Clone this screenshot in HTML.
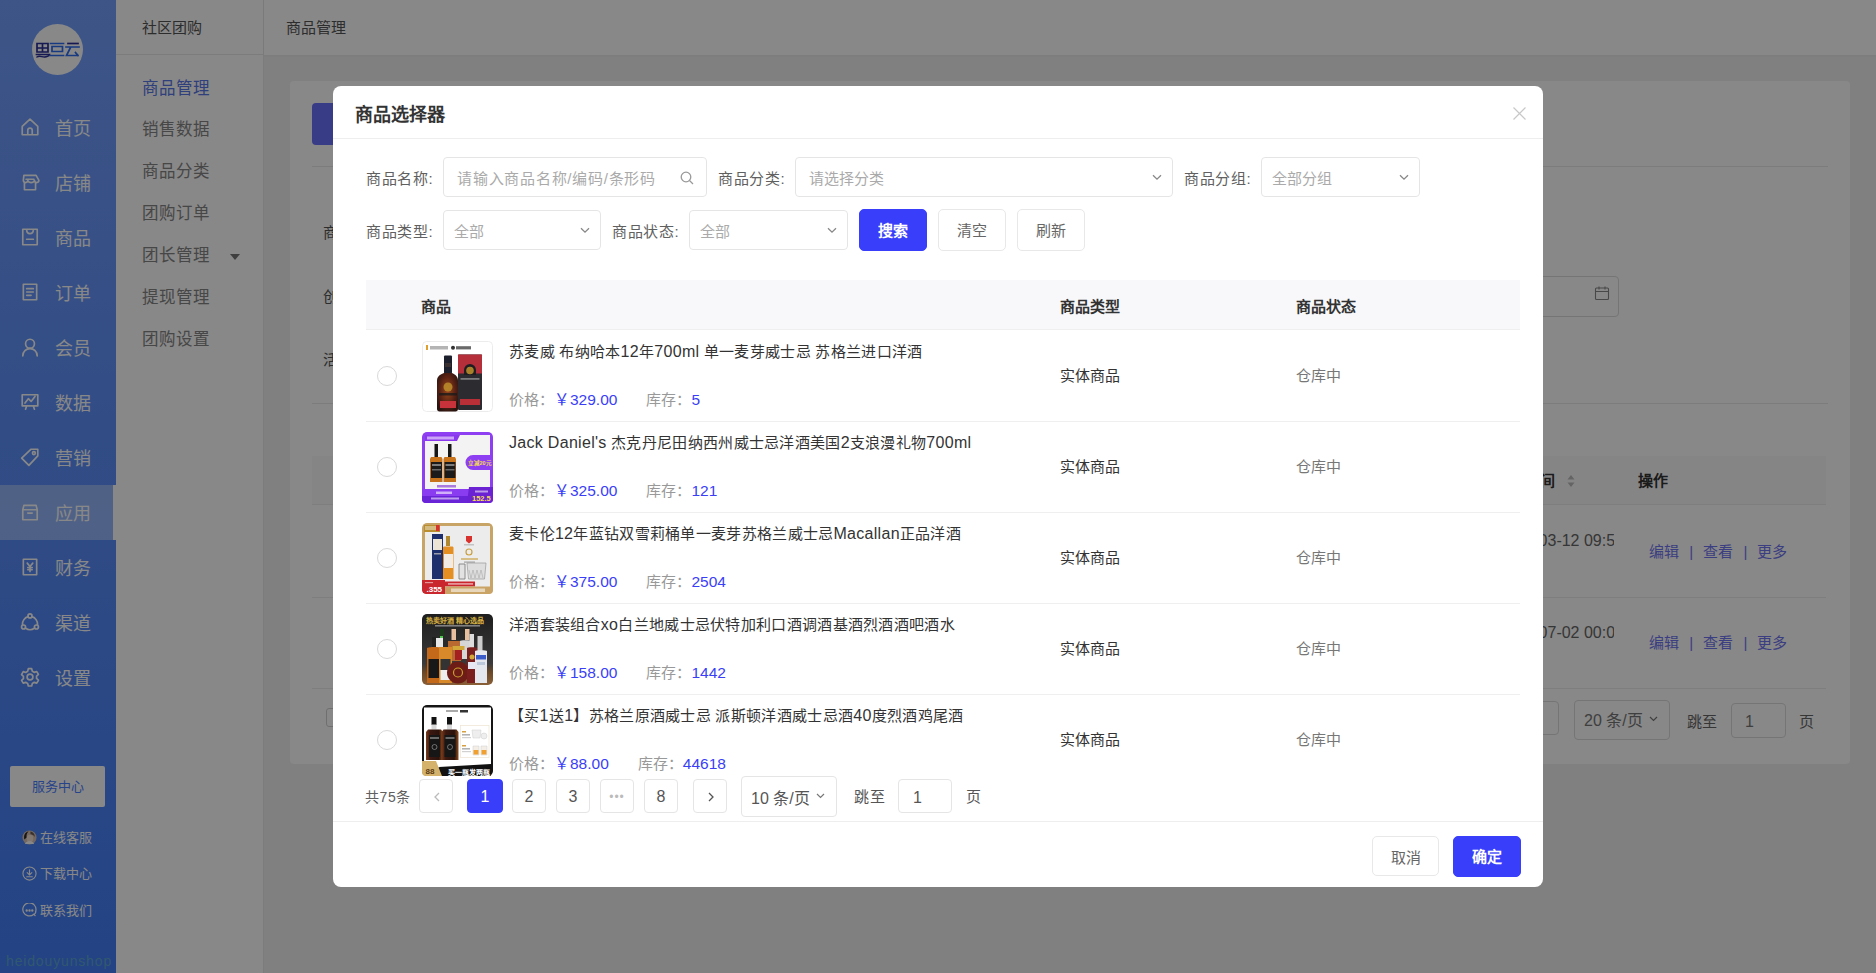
<!DOCTYPE html>
<html lang="zh-CN">
<head>
<meta charset="utf-8">
<style>
*{box-sizing:border-box;margin:0;padding:0}
html,body{width:1876px;height:973px;overflow:hidden}
body{position:relative;font-family:"Liberation Sans",sans-serif;font-size:14px;color:#333;background:#f0f0f0}
.abs{position:absolute}
/* sidebar */
#side{left:0;top:0;width:116px;height:973px;background:linear-gradient(#749ffd,#437ef8)}
#logo{left:32px;top:24px;width:51px;height:51px;border-radius:50%;background:#fff;color:#2a6bd8;font-size:14px;font-weight:bold;line-height:51px;text-align:center;letter-spacing:-1px}
.mi{left:0;width:116px;height:55px;color:#fff;font-size:18px}
.mi .ic{position:absolute;left:20px;top:17px;width:20px;height:20px}
.mi .tx{position:absolute;left:55px;top:2px;line-height:55px}
.mi.on{background:rgba(255,255,255,.36)}
.mi.on:after{content:"";position:absolute;right:0;top:0;width:3px;height:55px;background:#fff}
#svc{left:10px;top:766px;width:95px;height:41px;background:#fff;color:#4a80ff;font-size:13px;line-height:41px;text-align:center;border-radius:2px}
.bl{left:22px;height:20px;color:#fff;font-size:13px;line-height:20px}
.bl .ic{position:absolute;left:0;top:2px;width:15px;height:15px}
.bl .tx{position:absolute;left:18px;top:0;white-space:nowrap}
#wm{left:6px;top:953px;font-size:14px;line-height:16px;color:#62b0c8;letter-spacing:.85px;opacity:.8}
/* submenu */
#sub{left:116px;top:0;width:148px;height:973px;background:#fff;border-right:1px solid #e8e8e8}
#subh{left:0;top:0;width:147px;height:55px;border-bottom:1px solid #e8e8e8}
#subh span{position:absolute;left:26px;top:0;line-height:55px;font-size:15px;color:#555}
.si{left:26px;font-size:16.5px;color:#858585;line-height:20px;white-space:nowrap}
.si.on{color:#5a78e8}
/* header */
#hdr{left:264px;top:0;width:1612px;height:55px;background:#fff;box-shadow:0 1px 2px rgba(0,0,0,.04)}
#hdr span{position:absolute;left:22px;top:0;line-height:55px;font-size:15px;color:#555}
/* card */
#card{left:290px;top:81px;width:1560px;height:683px;background:#fff;border-radius:4px}
/* mask */
#mask{left:0;top:0;width:1876px;height:973px;background:rgba(0,0,0,.467)}
/* modal */
#modal{left:333px;top:86px;width:1210px;height:801px;background:#fff;border-radius:8px;overflow:hidden}

/* card content */
.cline{position:absolute;height:1px;background:#e8e8e8}
/* modal inner */
#mtitle{left:22px;top:15.5px;font-size:18px;font-weight:bold;color:#333;line-height:26px}
#mhline{left:0;top:52px;width:1210px;height:1px;background:#eee}
#mclose{left:1180px;top:21px;width:13px;height:13px}
.lbl{position:absolute;font-size:15px;color:#606060;line-height:20px;white-space:nowrap;letter-spacing:.6px}
.inp{position:absolute;height:40px;border:1px solid #e5e5e5;border-radius:4px;background:#fff}
.inp .ph{position:absolute;left:13px;top:1.5px;line-height:38px;font-size:15px;color:#aaa;white-space:nowrap}
.inp .arr{position:absolute;right:10px;top:16px;width:10px;height:7px}
.btn{position:absolute;height:42px;width:68px;border:1px solid #e8e8e8;border-radius:5px;background:#fff;font-size:15px;color:#666;line-height:42px;text-align:center}
.btn.pri{background:#383efa;border-color:#383efa;color:#fff;font-weight:bold}
#tbl{left:33px;top:194px;width:1154px;height:498px;overflow:hidden}
#thead{left:0;top:0;width:1154px;height:50px;background:#f8f8fa;border-bottom:1px solid #efefef}
.th{position:absolute;top:2px;line-height:49px;font-size:15px;font-weight:bold;color:#333}
.row{position:absolute;left:0;width:1154px;height:91px;border-bottom:1px solid #efefef}
.radio{position:absolute;left:11px;top:35px;width:20px;height:20px;border:1px solid #d9d9d9;border-radius:50%}
.pimg{position:absolute;left:56px;top:10px;width:71px;height:71px;border-radius:4px;overflow:hidden}
.pt{position:absolute;left:143px;top:11px;font-size:15px;color:#333;line-height:20px;white-space:nowrap;letter-spacing:.3px}
.pp{position:absolute;left:143px;top:59px;font-size:15px;line-height:20px;white-space:nowrap;color:#999}
.pp b{font-weight:normal;color:#3a3ef7;font-size:15.5px}
.l{font-size:16px}
.typ{position:absolute;left:694px;top:35px;font-size:15px;color:#333;line-height:20px}
.sta{position:absolute;left:930px;top:35px;font-size:15px;color:#777;line-height:20px}
.pg{position:absolute;top:693px;height:34px;width:34px;border:1px solid #e5e5e5;border-radius:4px;font-size:16px;color:#555;line-height:34px;text-align:center}
.pg.on{background:#383efa;border-color:#383efa;color:#fff;width:36px}
#mfline{left:0;top:735px;width:1210px;height:1px;background:#eee}
</style>
</head>
<body>
<div id="side" class="abs">
  <div id="logo" class="abs"><svg width="51" height="51" viewBox="0 0 51 51" fill="none" stroke-width="1.7" stroke-linecap="square"><g stroke="#2a2f9a"><path d="M5 19.5h11M5 20.5v7.5h11v-7.5M10.5 20v8M5 24h11M4.5 30.5h13"/><path d="M5 33c3-2 5 .5 8 0s3-1 4-1.5" stroke-width="1.4"/></g><g stroke="#2d6df0"><path d="M18.5 19.5h13M20 22.5h10.5v5H20zM18.5 31.5h13"/><path d="M36 19.5h10" stroke="#2a2f9a"/><path d="M34 23h13M38.5 23.5l-4 8h11.5M43.5 28.5l2.5 3"/></g></svg></div>
  <div class="mi abs" style="top:100px"><svg class="ic" viewBox="0 0 18 18" fill="none" stroke="#fff" stroke-width="1.5" stroke-linejoin="round" stroke-linecap="round"><path d="M2 8.5L9 2l7 6.5V16H2z M7 16v-4a2 2 0 0 1 4 0v4"/></svg><span class="tx">首页</span></div>
  <div class="mi abs" style="top:155px"><svg class="ic" viewBox="0 0 18 18" fill="none" stroke="#fff" stroke-width="1.5" stroke-linejoin="round" stroke-linecap="round"><path d="M3.5 3h11l2.5 4.5c0 1.2-1 2-2 2s-2-.8-2-2c0 1.2-1.8 2-3 2s-3-.8-3-2c0 1.2-1 2-2 2s-2-.8-2-2z M4 9.5V16h10V9.5 M5.5 6.5h7"/></svg><span class="tx">店铺</span></div>
  <div class="mi abs" style="top:210px"><svg class="ic" viewBox="0 0 18 18" fill="none" stroke="#fff" stroke-width="1.5" stroke-linejoin="round" stroke-linecap="round"><path d="M2.5 2h13v14h-13z M6 2.5c0 2 1.3 3.5 3 3.5s3-1.5 3-3.5 M6 11h6"/></svg><span class="tx">商品</span></div>
  <div class="mi abs" style="top:265px"><svg class="ic" viewBox="0 0 18 18" fill="none" stroke="#fff" stroke-width="1.5" stroke-linejoin="round" stroke-linecap="round"><path d="M3 2h12v14H3z M6 6h6 M6 9h6 M6 12h4"/></svg><span class="tx">订单</span></div>
  <div class="mi abs" style="top:320px"><svg class="ic" viewBox="0 0 18 18" fill="none" stroke="#fff" stroke-width="1.5" stroke-linejoin="round" stroke-linecap="round"><circle cx="9" cy="6" r="4"/><path d="M2.5 17c0-4 3-6.5 6.5-6.5s6.5 2.5 6.5 6.5"/></svg><span class="tx">会员</span></div>
  <div class="mi abs" style="top:375px"><svg class="ic" viewBox="0 0 18 18" fill="none" stroke="#fff" stroke-width="1.5" stroke-linejoin="round" stroke-linecap="round"><path d="M2 2.5h14v10H2z M4.5 10l3-4 2.5 2.5 3.5-4.5 M6 12.5l-1 3 M12 12.5l1 3"/></svg><span class="tx">数据</span></div>
  <div class="mi abs" style="top:430px"><svg class="ic" viewBox="0 0 18 18" fill="none" stroke="#fff" stroke-width="1.5" stroke-linejoin="round" stroke-linecap="round"><path d="M10 2h6v6l-8 8.5L1.5 10z"/><circle cx="12.5" cy="5.5" r="1.3"/></svg><span class="tx">营销</span></div>
  <div class="mi abs on" style="top:485px"><svg class="ic" viewBox="0 0 18 18" fill="none" stroke="#fff" stroke-width="1.5" stroke-linejoin="round" stroke-linecap="round"><path d="M2.5 7h13v9h-13z M3.5 3h11l1 4h-13z M7 10h4"/></svg><span class="tx">应用</span></div>
  <div class="mi abs" style="top:540px"><svg class="ic" viewBox="0 0 18 18" fill="none" stroke="#fff" stroke-width="1.5" stroke-linejoin="round" stroke-linecap="round"><path d="M3 2h12v14H3z M6.5 5.5L9 8.5l2.5-3 M9 8.5v4.5 M7 9.5h4 M7 11.5h4"/></svg><span class="tx">财务</span></div>
  <div class="mi abs" style="top:595px"><svg class="ic" viewBox="0 0 18 18" fill="none" stroke="#fff" stroke-width="1.5" stroke-linejoin="round" stroke-linecap="round"><circle cx="9" cy="3.5" r="1.8"/><circle cx="3.2" cy="13.5" r="1.8"/><circle cx="14.8" cy="13.5" r="1.8"/><path d="M7.3 4.2A7 7 0 0 0 2.3 11.8 M10.7 4.2a7 7 0 0 1 5 7.6 M5 14.6a7 7 0 0 0 8 0"/></svg><span class="tx">渠道</span></div>
  <div class="mi abs" style="top:650px"><svg class="ic" viewBox="0 0 18 18" fill="none" stroke="#fff" stroke-width="1.5" stroke-linejoin="round" stroke-linecap="round"><path d="M7.5 1.5h3l.6 2.3 1.7 1 2.3-.7 1.5 2.6-1.7 1.6v2l1.7 1.6-1.5 2.6-2.3-.7-1.7 1-.6 2.3h-3l-.6-2.3-1.7-1-2.3.7L1.4 12l1.7-1.6v-2L1.4 6.8l1.5-2.6 2.3.7 1.7-1z"/><circle cx="9" cy="9" r="2.6"/></svg><span class="tx">设置</span></div>
  <div id="svc" class="abs">服务中心</div>
  <div class="bl abs" style="top:828px"><svg class="ic" viewBox="0 0 16 16"><circle cx="8" cy="8" r="7.5" fill="#d9c2b4"/><path d="M2.5 10C1.5 6 3 2 7 1.5c-2 1.5-2.5 4-2 6.5z" fill="#2a2420"/><path d="M9 1.5c3 .5 5 3 4.5 6-1-2-2.5-3-4.5-3z" fill="#6a5a50"/><ellipse cx="8.5" cy="9" rx="3.5" ry="4" fill="#f4e2d6"/><path d="M3 15c1-2.5 3-3 5-3s4 .5 5 3" fill="#fff"/></svg><span class="tx">在线客服</span></div>
  <div class="bl abs" style="top:864px"><svg class="ic" viewBox="0 0 16 16" fill="none" stroke="#fff" stroke-width="1.2" stroke-linecap="round"><circle cx="8" cy="8" r="7"/><path d="M8 4v5 M5.5 7L8 9.5 10.5 7 M5 11.5h6"/></svg><span class="tx">下载中心</span></div>
  <div class="bl abs" style="top:901px"><svg class="ic" viewBox="0 0 16 16" fill="none" stroke="#fff" stroke-width="1.3" stroke-linecap="round"><path d="M14 13.5L12.6 12A7 7 0 1 1 14.8 8c0 2-.8 3.6-2.2 4"/><circle cx="5" cy="8" r=".6" fill="#fff"/><circle cx="8" cy="8" r=".6" fill="#fff"/><circle cx="11" cy="8" r=".6" fill="#fff"/></svg><span class="tx">联系我们</span></div>
  <div id="wm" class="abs">heidouyunshop</div>
</div>
<div id="sub" class="abs">
  <div id="subh" class="abs"><span>社区团购</span></div>
  <div class="si abs on" style="top:77.5px">商品管理</div>
  <div class="si abs" style="top:119.4px">销售数据</div>
  <div class="si abs" style="top:161.3px">商品分类</div>
  <div class="si abs" style="top:203.2px">团购订单</div>
  <div class="si abs" style="top:245.1px">团长管理</div>
  <div class="si abs" style="top:287.0px">提现管理</div>
  <div class="si abs" style="top:328.9px">团购设置</div>
  <div class="abs" style="left:114px;top:254px;width:0;height:0;border-left:5px solid transparent;border-right:5px solid transparent;border-top:6px solid #777"></div>
</div>
<div id="hdr" class="abs"><span>商品管理</span></div>
<div id="card" class="abs">
  <div class="abs" style="left:22px;top:22px;width:120px;height:42px;background:#6a70fa;border-radius:4px"></div>
  <div class="cline" style="left:22px;top:85px;width:1516px"></div>
  <div class="abs" style="left:33px;top:142px;font-size:15px;color:#555;line-height:20px">商品名称</div>
  <div class="abs" style="left:33px;top:206px;font-size:15px;color:#555;line-height:20px">创建时间</div>
  <div class="abs" style="left:33px;top:268.5px;font-size:15px;color:#555;line-height:20px">活动状态</div>
  <div class="abs" style="left:1100px;top:195px;width:229px;height:41px;border:1px solid #dcdcdc;border-radius:4px"><svg style="position:absolute;left:203px;top:8px;width:16px;height:16px" viewBox="0 0 16 16" fill="none" stroke="#888" stroke-width="1.1"><rect x="1.5" y="3" width="13" height="11.5" rx="1"/><path d="M1.5 6.5h13M5 1.5v3M11 1.5v3"/></svg></div>
  <div class="cline" style="left:22px;top:322px;width:1516px"></div>
  <div class="abs" style="left:22px;top:375px;width:1514px;height:49px;background:#fafafa;border-bottom:1px solid #ececec"></div>
  <div class="abs" style="left:1205px;top:390px;font-size:15px;font-weight:bold;color:#333;line-height:20px">创建时间</div>
  <svg class="abs" style="left:1277px;top:393px;width:8px;height:14px" viewBox="0 0 8 14" fill="#bbb"><path d="M4 1l3.5 4.5h-7zM4 13l3.5-4.5h-7z"/></svg>
  <div class="abs" style="left:1348px;top:390px;font-size:15px;font-weight:bold;color:#333;line-height:20px">操作</div>
  <div class="cline" style="left:22px;top:516px;width:1514px;background:#ececec"></div>
  <div class="cline" style="left:22px;top:607px;width:1514px;background:#ececec"></div>
  <div class="abs" style="left:1170px;top:449.5px;width:154px;height:22px;overflow:hidden;font-size:16px;color:#666;line-height:20px;white-space:nowrap"><span id="d1" style="position:absolute;right:-10px">2023-03-12 09:56</span></div>
  <div class="abs" style="left:1170px;top:541.5px;width:154px;height:22px;overflow:hidden;font-size:16px;color:#666;line-height:20px;white-space:nowrap"><span style="position:absolute;right:-10px">2023-07-02 00:00</span></div>
  <div class="abs" style="left:1359px;top:461px;font-size:15px;color:#7075f0;line-height:20px;white-space:nowrap">编辑 <span style="margin:0 6px">|</span> 查看 <span style="margin:0 6px">|</span> 更多</div>
  <div class="abs" style="left:1359px;top:552px;font-size:15px;color:#7075f0;line-height:20px;white-space:nowrap">编辑 <span style="margin:0 6px">|</span> 查看 <span style="margin:0 6px">|</span> 更多</div>
  <div class="abs" style="left:36px;top:627px;width:19px;height:19px;border:1px solid #d0d0d0;border-radius:3px"></div>
  <div class="abs" style="left:1235px;top:620px;width:34px;height:34px;border:1px solid #dcdcdc;border-radius:4px"></div>
  <div class="abs" style="left:1284px;top:619px;width:96px;height:40px;border:1px solid #dcdcdc;border-radius:4px;font-size:16px;color:#777;line-height:40px;padding-left:9px">20 条/页<svg style="position:absolute;left:74px;top:15px;width:9px;height:6px" viewBox="0 0 9 6" fill="none" stroke="#777" stroke-width="1.2"><path d="M1 1l3.5 3.5L8 1"/></svg></div>
  <div class="abs" style="left:1397px;top:631px;font-size:15px;color:#666;line-height:20px">跳至</div>
  <div class="abs" style="left:1441px;top:622px;width:55px;height:35px;border:1px solid #dcdcdc;border-radius:4px;font-size:16px;color:#777;line-height:35px;padding-left:13px">1</div>
  <div class="abs" style="left:1509px;top:631px;font-size:15px;color:#666;line-height:20px">页</div>
</div>
<div id="mask" class="abs"></div>
<div id="modal" class="abs">
  <div id="mtitle" class="abs">商品选择器</div>
  <div id="mhline" class="abs"></div>
  <svg id="mclose" class="abs" viewBox="0 0 13 13" fill="none" stroke="#c8c8c8" stroke-width="1.2"><path d="M.5.5l12 12M12.5.5l-12 12"/></svg>
  <div class="lbl" style="left:33px;top:83px">商品名称:</div>
  <div class="inp" style="left:110px;top:71px;width:264px"><span class="ph" style="letter-spacing:.75px">请输入商品名称/编码/条形码</span><svg style="position:absolute;left:236px;top:13px;width:14px;height:14px" viewBox="0 0 14 14" fill="none" stroke="#999" stroke-width="1.3"><circle cx="6" cy="6" r="4.8"/><path d="M9.5 9.5l3.5 3.5"/></svg></div>
  <div class="lbl" style="left:385px;top:83px">商品分类:</div>
  <div class="inp" style="left:462px;top:71px;width:378px"><span class="ph">请选择分类</span><svg class="arr" viewBox="0 0 10 7" fill="none" stroke="#888" stroke-width="1.3"><path d="M1 1.2l4 4 4-4"/></svg></div>
  <div class="lbl" style="left:851px;top:83px">商品分组:</div>
  <div class="inp" style="left:928px;top:71px;width:159px"><span class="ph" style="left:10px">全部分组</span><svg class="arr" viewBox="0 0 10 7" fill="none" stroke="#888" stroke-width="1.3"><path d="M1 1.2l4 4 4-4"/></svg></div>
  <div class="lbl" style="left:33px;top:136px">商品类型:</div>
  <div class="inp" style="left:110px;top:124px;width:158px"><span class="ph" style="left:10px">全部</span><svg class="arr" viewBox="0 0 10 7" fill="none" stroke="#888" stroke-width="1.3"><path d="M1 1.2l4 4 4-4"/></svg></div>
  <div class="lbl" style="left:279px;top:136px">商品状态:</div>
  <div class="inp" style="left:356px;top:124px;width:159px"><span class="ph" style="left:10px">全部</span><svg class="arr" viewBox="0 0 10 7" fill="none" stroke="#888" stroke-width="1.3"><path d="M1 1.2l4 4 4-4"/></svg></div>
  <div class="btn pri" style="left:526px;top:123px">搜索</div>
  <div class="btn" style="left:605px;top:123px">清空</div>
  <div class="btn" style="left:684px;top:123px">刷新</div>
  <div id="tbl" class="abs">
    <div id="thead" class="abs"><span class="th" style="left:55px">商品</span><span class="th" style="left:694px">商品类型</span><span class="th" style="left:930px">商品状态</span></div>
    <div class="row" style="top:51px"><div class="radio"></div><div class="pimg"><svg width="71" height="71" viewBox="0 0 71 71"><defs><radialGradient id="g1" cx=".5" cy=".45" r=".6"><stop offset="0" stop-color="#9a4a1a"/><stop offset=".6" stop-color="#5a2214"/><stop offset="1" stop-color="#2a1410"/></radialGradient></defs><rect x=".5" y=".5" width="70" height="70" rx="4" fill="#fff" stroke="#ececec"/><rect x="4" y="4" width="2" height="5" fill="#e0a030"/><rect x="8" y="5" width="18" height="3.5" fill="#777" opacity=".55"/><circle cx="31" cy="6.8" r="2" fill="#333"/><rect x="34" y="5.2" width="15" height="3.2" fill="#444" opacity=".8"/><rect x="22" y="14.5" width="8" height="18" rx="1" fill="#1c1f2c"/><rect x="23" y="22" width="6" height="4" fill="#3a3030"/><path d="M22 32h8c4 2 6 4 6 8v28c0 1.5-1 2.5-2.5 2.5h-16c-1.5 0-2.5-1-2.5-2.5V40c0-4 2-6 7-8z" fill="url(#g1)"/><circle cx="26" cy="46" r="4.5" fill="#b8882a" opacity=".9"/><rect x="17" y="52" width="18" height="2.5" fill="#1a1a1a" opacity=".8"/><rect x="18" y="60" width="16" height="7" fill="#c8323a"/><rect x="36" y="13.5" width="24" height="55.5" rx="1" fill="#2c2c30"/><rect x="36" y="13.5" width="24" height="19" fill="#b52f3a"/><path d="M42 34v-5a6 6 0 0 1 12 0v5z" fill="#1e1e22"/><circle cx="48" cy="29.5" r="3.8" fill="#a8802a"/><rect x="38.5" y="37" width="19" height="1.8" fill="#bbb" opacity=".55"/><rect x="38" y="58" width="20" height="6" fill="#b92f38"/></svg></div><div class="pt">苏麦威 布纳哈本<span class="l">12</span>年<span class="l">700ml</span> 单一麦芽威士忌 苏格兰进口洋酒</div><div class="pp">价格：<b>￥329.00</b><span style="display:inline-block;width:29px"></span>库存：<b>5</b></div><div class="typ">实体商品</div><div class="sta">仓库中</div></div>
    <div class="row" style="top:142px"><div class="radio"></div><div class="pimg"><svg width="71" height="71" viewBox="0 0 71 71"><rect x="0" y="0" width="71" height="71" rx="5" fill="#8f3ff2"/><rect x="3" y="6" width="65" height="53" fill="#f3f3f3"/><path d="M36 3h32v4H36z" fill="#f3f3f3"/><path d="M3 3h35l-3 6H3z" fill="#8a38ee"/><rect x="5" y="4.5" width="27" height="3" fill="#fff" opacity=".55"/><rect x="12.5" y="12" width="3.5" height="14" fill="#161616"/><path d="M9 25h10.5l1 2v23h-12.5V27z" fill="#c8741c"/><rect x="9" y="30" width="11" height="16" fill="#1b1b1b"/><rect x="10" y="32" width="9" height="2" fill="#ddd" opacity=".5"/><rect x="10" y="37" width="9" height="1.5" fill="#ddd" opacity=".4"/><rect x="26" y="12" width="3.5" height="14" fill="#161616"/><path d="M22.5 25H33l1 2v23H21.5V27z" fill="#c8741c"/><rect x="22.5" y="30" width="11" height="16" fill="#1b1b1b"/><rect x="23.5" y="32" width="9" height="2" fill="#ddd" opacity=".5"/><rect x="23.5" y="37" width="9" height="1.5" fill="#ddd" opacity=".4"/><path d="M51 23h20v15H51a7.5 7.5 0 0 1 0-15z" fill="#8f3ff2"/><text x="45.5" y="32.8" font-size="5.6" font-weight="bold" fill="#f5dc50" font-family="Liberation Sans,sans-serif">立减20元</text><rect x="15" y="53" width="19" height="2.5" fill="#7a2ad0" opacity=".6"/><rect x="0" y="57" width="71" height="14" fill="#8a3cf0"/><rect x="0" y="64" width="46" height="7" fill="#6a24d8"/><path d="M47 55h24v16H45z" fill="#6a22d2"/><rect x="53" y="58.5" width="13" height="2" fill="#fff" opacity=".55"/><text x="50" y="69" font-size="7.5" font-weight="bold" fill="#f5dc50" font-family="Liberation Sans,sans-serif">152.5</text><rect x="14" y="59.5" width="16" height="2.5" fill="#fff" opacity=".6"/><rect x="9" y="65.5" width="28" height="2" fill="#fff" opacity=".55"/></svg></div><div class="pt"><span class="l">Jack Daniel's</span> 杰克丹尼田纳西州威士忌洋酒美国<span class="l">2</span>支浪漫礼物<span class="l">700ml</span></div><div class="pp">价格：<b>￥325.00</b><span style="display:inline-block;width:29px"></span>库存：<b>121</b></div><div class="typ">实体商品</div><div class="sta">仓库中</div></div>
    <div class="row" style="top:233px"><div class="radio"></div><div class="pimg"><svg width="71" height="71" viewBox="0 0 71 71"><rect x="0" y="0" width="71" height="71" rx="5" fill="#c8a466"/><rect x="3" y="3" width="65" height="62" fill="#ececec"/><rect x="2" y="2" width="16" height="7" fill="#b88e30"/><rect x="14" y="2" width="3.5" height="6" fill="#d8322e"/><rect x="3" y="3" width="11" height="4" fill="#fff" opacity=".4"/><rect x="10" y="11" width="11" height="45" fill="#1d2f6c"/><rect x="11" y="16" width="9" height="11" fill="#ece4d4"/><rect x="12" y="30" width="7" height="1.5" fill="#ece4d4" opacity=".6"/><rect x="24" y="13" width="4" height="10" fill="#b08830"/><path d="M22 23.5h8c1 0 1.5 .5 1.5 1.5v31H21V25c0-1 .5-1.5 1-1.5z" fill="#e48f24"/><rect x="22" y="31" width="9" height="14" fill="#f1ebe4"/><path d="M44 13h6v5l-3 2.5-3-2.5z" fill="#d8322e"/><rect x="42" y="21" width="10" height="1.5" fill="#999" opacity=".5"/><circle cx="47" cy="29" r="3" fill="none" stroke="#c8a040" stroke-width="1.2"/><rect x="39" y="35" width="17" height="2" fill="#c8a040" opacity=".6"/><rect x="42" y="38.5" width="11" height="1.2" fill="#555" opacity=".5"/><path d="M37 41h6v15h-6z" fill="#e2e2e2" stroke="#777" stroke-width=".8"/><path d="M45 40h19l-1.5 16H46.5z" fill="#dedede" stroke="#999" stroke-width=".7"/><path d="M47 47l2 8 2-8 2 8 2-8 2 8 2-8 2 8" fill="none" stroke="#aaa" stroke-width=".6"/><path d="M0 57h23v14H4a4 4 0 0 1-4-4z" fill="#c9262e"/><text x="4.5" y="69" font-size="8" font-weight="bold" fill="#fff" font-family="Liberation Sans,sans-serif">.355</text><rect x="3" y="59" width="8" height="1.2" fill="#fff" opacity=".5"/><rect x="23" y="58.5" width="30" height="5" fill="#c9262e"/><rect x="26" y="60" width="25" height="1.8" fill="#fff" opacity=".5"/><rect x="23" y="63.5" width="48" height="7.5" fill="#c9a466"/><rect x="29" y="65.5" width="34" height="3.5" fill="#fff" opacity=".55"/></svg></div><div class="pt">麦卡伦<span class="l">12</span>年蓝钻双雪莉桶单一麦芽苏格兰威士忌<span class="l">Macallan</span>正品洋酒</div><div class="pp">价格：<b>￥375.00</b><span style="display:inline-block;width:29px"></span>库存：<b>2504</b></div><div class="typ">实体商品</div><div class="sta">仓库中</div></div>
    <div class="row" style="top:324px"><div class="radio"></div><div class="pimg"><svg width="71" height="71" viewBox="0 0 71 71"><defs><linearGradient id="g4" x1="0" y1="0" x2="0" y2="1"><stop offset="0" stop-color="#1e1e1e"/><stop offset=".7" stop-color="#3a3a3a"/><stop offset=".82" stop-color="#6a4828"/><stop offset="1" stop-color="#8a6038"/></linearGradient></defs><rect x="0" y="0" width="71" height="71" rx="5" fill="url(#g4)"/><text x="4" y="8.5" font-size="7" font-weight="bold" fill="#d8b040" font-family="Liberation Sans,sans-serif">热卖好酒 精心选品</text><rect x="13" y="11" width="45" height="1.6" fill="#ccc" opacity=".55"/><rect x="18" y="15" width="4" height="9" fill="#1a3a1a"/><rect x="18" y="22" width="4" height="3" fill="#4ac84a"/><rect x="14" y="24" width="11" height="18" fill="#e8e8e8"/><rect x="29.5" y="15" width="4.5" height="11" fill="#e8c0a0"/><path d="M25 27h14v20H25z" fill="#b86a30"/><rect x="43" y="15" width="4.5" height="11" fill="#e8c0a0"/><path d="M38 27c0-1 9-1 14 0v18H38z" fill="#d6d6d6"/><rect x="10" y="23" width="4" height="11" fill="#222"/><path d="M5 34c1-1.5 14-1.5 15 0v35H5z" fill="#c4681a"/><rect x="6.5" y="45" width="12" height="19" fill="#181818"/><rect x="21" y="21" width="5" height="12" fill="#2a2a2a"/><path d="M17 33h13v36H17z" fill="#d88a2a"/><rect x="18.5" y="45" width="10" height="11" fill="#333"/><rect x="18.5" y="56" width="10" height="10" fill="#eee"/><circle cx="36" cy="58.5" r="11" fill="#6e1c16"/><circle cx="36" cy="58.5" r="4.5" fill="none" stroke="#c8a030" stroke-width="1.2"/><rect x="33" y="35" width="7" height="11" fill="#a41f20"/><rect x="30.5" y="32" width="12" height="4" fill="#d2a83a"/><rect x="47.5" y="20" width="4.5" height="14" fill="#ddd"/><path d="M45 34c0-1 10-1 10 0v35H45z" fill="#7a1e1e"/><circle cx="50" cy="43" r="2.5" fill="#d2a83a"/><rect x="46" y="48" width="8" height="7" fill="#e8e8f4"/><rect x="55.5" y="22" width="5" height="15" fill="#ccc"/><path d="M53 37c0-1 12-1 12 0v32H53z" fill="#e4e8ee"/><rect x="54" y="41" width="10" height="4.5" fill="#3a5cc8"/><rect x="55" y="48" width="8" height="3" fill="#bcc8dc"/></svg></div><div class="pt">洋酒套装组合<span class="l">xo</span>白兰地威士忌伏特加利口酒调酒基酒烈酒酒吧酒水</div><div class="pp">价格：<b>￥158.00</b><span style="display:inline-block;width:29px"></span>库存：<b>1442</b></div><div class="typ">实体商品</div><div class="sta">仓库中</div></div>
    <div class="row" style="top:415px"><div class="radio"></div><div class="pimg"><svg width="71" height="71" viewBox="0 0 71 71"><defs><linearGradient id="g5" x1="0" x2="1"><stop offset="0" stop-color="#7a3a18"/><stop offset=".25" stop-color="#3a1810"/><stop offset=".75" stop-color="#2a120c"/><stop offset="1" stop-color="#8a4a1e"/></linearGradient></defs><rect x="0" y="0" width="71" height="71" rx="5" fill="#151515"/><rect x="2" y="2.5" width="67" height="60" fill="#fff"/><rect x="24" y="5" width="12" height="2" fill="#aaa"/><rect x="38" y="5" width="8" height="2.5" fill="#333"/><rect x="9.5" y="12" width="5" height="8" fill="#111"/><rect x="9.5" y="19.5" width="5" height="5" fill="#d8d8d8"/><path d="M6 24.5h13l2 2.5v28H4V27z" fill="url(#g5)"/><rect x="7" y="30" width="11" height="22" fill="#161616"/><rect x="8" y="32" width="9" height="2" fill="#bbb" opacity=".5"/><circle cx="12.5" cy="42" r="2.5" fill="none" stroke="#aaa" stroke-width=".6"/><rect x="25" y="12" width="5" height="8" fill="#111"/><rect x="25" y="19.5" width="5" height="5" fill="#d8d8d8"/><path d="M21.5 24.5h13l2 2.5v28h-17V27z" fill="url(#g5)"/><rect x="22.5" y="30" width="11" height="22" fill="#161616"/><rect x="23.5" y="32" width="9" height="2" fill="#bbb" opacity=".5"/><circle cx="28" cy="42" r="2.5" fill="none" stroke="#aaa" stroke-width=".6"/><rect x="38.5" y="20.5" width="28.5" height="32" fill="#fff" stroke="#efe6d6" stroke-width=".8"/><rect x="40" y="26" width="4" height="1.5" fill="#d8a040"/><rect x="40" y="29" width="8" height="1.6" fill="#555" opacity=".45"/><rect x="40" y="32" width="9" height="1.2" fill="#999" opacity=".45"/><path d="M50 25h9l-1 8h-7z" fill="#eee" stroke="#ccc" stroke-width=".5"/><circle cx="62" cy="31" r="3" fill="#eee" stroke="#ccc" stroke-width=".5"/><rect x="40" y="40" width="4" height="1.5" fill="#d8a040"/><rect x="40" y="43" width="8" height="1.6" fill="#555" opacity=".45"/><rect x="40" y="46" width="9" height="1.2" fill="#999" opacity=".45"/><path d="M51 41h6v9h-6z" fill="#f4eee6" stroke="#ccc" stroke-width=".5"/><rect x="51.5" y="45" width="5" height="4.5" fill="#f0a030"/><path d="M59 41h6v9h-6z" fill="#f4eee6" stroke="#ccc" stroke-width=".5"/><rect x="59.5" y="45" width="5" height="4.5" fill="#f0a030"/><path d="M0 56h14l6 15H0z" fill="#d4b26c"/><text x="3.5" y="69" font-size="8" font-weight="bold" fill="#5a3a10" font-family="Liberation Sans,sans-serif">88</text><path d="M17 62l52-3v12H21z" fill="#111"/><text x="26" y="69.5" font-size="7" font-weight="bold" fill="#fff" font-family="Liberation Sans,sans-serif">买一瓶发两瓶</text></svg></div><div class="pt">【买<span class="l">1</span>送<span class="l">1</span>】苏格兰原酒威士忌 派斯顿洋酒威士忌酒<span class="l">40</span>度烈酒鸡尾酒</div><div class="pp">价格：<b>￥88.00</b><span style="display:inline-block;width:29px"></span>库存：<b>44618</b></div><div class="typ">实体商品</div><div class="sta">仓库中</div></div>
  </div>
  <div class="lbl" style="left:32px;top:701px;font-size:14px">共75条</div>
  <div class="pg" style="left:86px"><svg style="position:absolute;left:13px;top:12px;width:7px;height:10px" viewBox="0 0 7 10" fill="none" stroke="#bbb" stroke-width="1.3"><path d="M6 1L2 5l4 4"/></svg></div>
  <div class="pg on" style="left:134px">1</div>
  <div class="pg" style="left:179px">2</div>
  <div class="pg" style="left:223px">3</div>
  <div class="pg" style="left:267px;color:#bbb;font-size:12px;letter-spacing:1px">•••</div>
  <div class="pg" style="left:311px">8</div>
  <div class="pg" style="left:360px"><svg style="position:absolute;left:14px;top:12px;width:7px;height:10px" viewBox="0 0 7 10" fill="none" stroke="#555" stroke-width="1.3"><path d="M1 1l4 4-4 4"/></svg></div>
  <div class="inp" style="left:408px;top:690px;width:96px;height:41px"><span class="ph" style="left:9px;line-height:39px;color:#555;font-size:16px">10 条/页</span><svg style="position:absolute;left:74px;top:16px;width:9px;height:6px" viewBox="0 0 9 6" fill="none" stroke="#777" stroke-width="1.2"><path d="M1 1l3.5 3.5L8 1"/></svg></div>
  <div class="lbl" style="left:521px;top:701px;color:#555">跳至</div>
  <div class="inp" style="left:565px;top:693px;width:54px;height:34px"><span class="ph" style="left:14px;top:0;line-height:35.5px;color:#555;font-size:16px">1</span></div>
  <div class="lbl" style="left:633px;top:701px;color:#555">页</div>
  <div id="mfline" class="abs"></div>
  <div class="btn" style="left:1039px;top:750px;width:67px;height:40px;line-height:41px">取消</div>
  <div class="btn pri" style="left:1120px;top:750px;height:41px;line-height:40px">确定</div>
</div>
</body>
</html>
